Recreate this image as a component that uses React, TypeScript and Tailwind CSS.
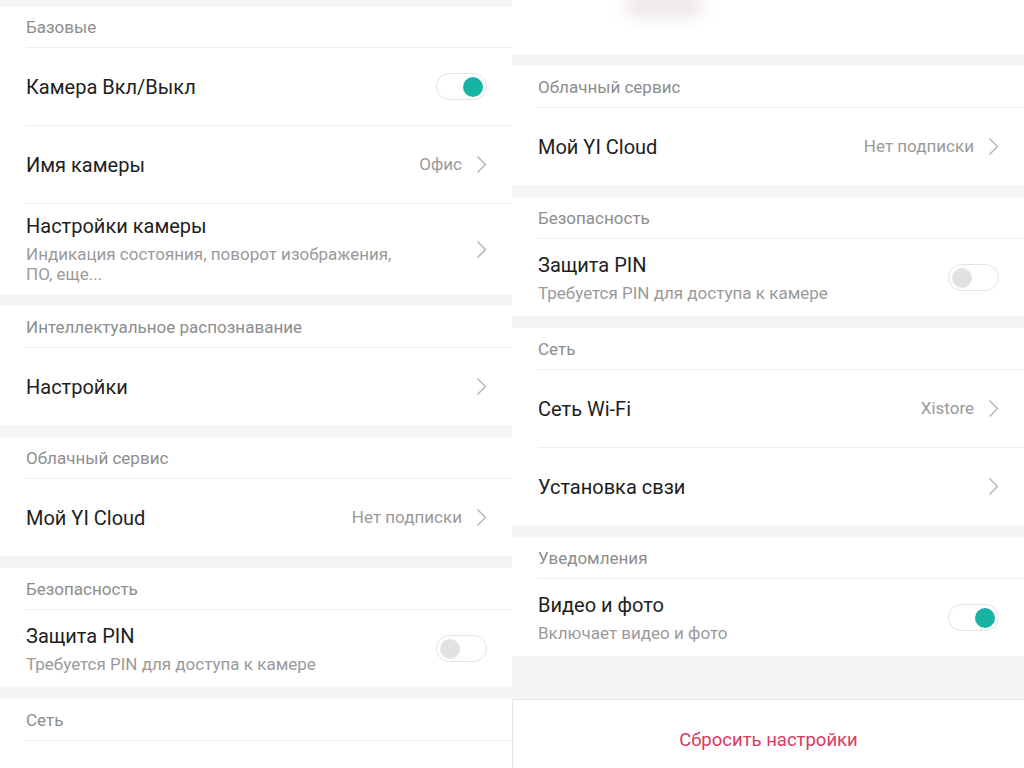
import React from "react";

type Item = {
  title: string;
  subtitle?: string;
  value?: string;
  toggle?: boolean;
  chevron?: boolean;
  tall?: boolean;
};

type Section = {
  header: string;
  items: Item[];
};

const leftSections: Section[] = [
  {
    header: "Базовые",
    items: [
      { title: "Камера Вкл/Выкл", toggle: true },
      { title: "Имя камеры", value: "Офис", chevron: true },
      {
        title: "Настройки камеры",
        subtitle: "Индикация состояния, поворот изображения, ПО, еще...",
        chevron: true,
        tall: true,
      },
    ],
  },
  {
    header: "Интеллектуальное распознавание",
    items: [{ title: "Настройки", chevron: true }],
  },
  {
    header: "Облачный сервис",
    items: [{ title: "Мой YI Cloud", value: "Нет подписки", chevron: true }],
  },
  {
    header: "Безопасность",
    items: [{ title: "Защита PIN", subtitle: "Требуется PIN для доступа к камере", toggle: false }],
  },
  // the next row is below the bottom edge of the screenshot
  { header: "Сеть", items: [] },
];

const rightSections: Section[] = [
  {
    header: "Облачный сервис",
    items: [{ title: "Мой YI Cloud", value: "Нет подписки", chevron: true }],
  },
  {
    header: "Безопасность",
    items: [{ title: "Защита PIN", subtitle: "Требуется PIN для доступа к камере", toggle: false }],
  },
  {
    header: "Сеть",
    items: [
      { title: "Сеть Wi-Fi", value: "Xistore", chevron: true },
      { title: "Установка свзи", chevron: true },
    ],
  },
  {
    header: "Уведомления",
    items: [{ title: "Видео и фото", subtitle: "Включает видео и фото", toggle: true }],
  },
];

function Chevron() {
  return (
    <svg width="11" height="19" viewBox="0 0 11 19" fill="none" className="shrink-0">
      <polyline points="1.5,1.5 9.5,9.5 1.5,17.5" stroke="#b8b8b8" strokeWidth="1.6" strokeLinejoin="round" />
    </svg>
  );
}

function Toggle({ on }: { on: boolean }) {
  return (
    <div
      className={
        "flex h-[27px] w-[51px] shrink-0 items-center rounded-full border border-[#e3e3e3] bg-white px-[3px] " +
        (on ? "justify-end" : "justify-start")
      }
    >
      <div className={on ? "h-[20px] w-[20px] rounded-full bg-[#17b4a4]" : "h-[20px] w-[20px] rounded-full bg-[#e2e2e2]"} />
    </div>
  );
}

function Row({ item }: { item: Item }) {
  return (
    <div
      className={
        "ml-[26px] flex shrink-0 items-center border-t border-[#eeeeee] pr-[25px] " +
        (item.tall ? "h-[91px]" : "h-[78px]")
      }
    >
      <div className="flex min-w-0 flex-1 flex-col justify-center">
        <div className="text-[20px] leading-[24px] text-[#1e1e1e]">{item.title}</div>
        {item.subtitle && (
          <div className={"mt-[6px] text-[17px] leading-[20px] text-[#9a9a9a] " + (item.tall ? "w-[385px]" : "")}>
            {item.subtitle}
          </div>
        )}
      </div>
      {item.value && <div className="mr-[14px] text-[17px] text-[#9a9a9a]">{item.value}</div>}
      {item.chevron && <Chevron />}
      {item.toggle !== undefined && <Toggle on={item.toggle} />}
    </div>
  );
}

function SectionBlock({ section, first }: { section: Section; first?: boolean }) {
  return (
    <div className={"shrink-0 bg-white " + (first ? "" : "mt-[12px]")}>
      <div
        className={
          "flex items-center px-[26px] text-[17px] text-[#8d8d8d] " + (first ? "h-[40px] pt-[1px]" : "h-[41px] pt-[2px]")
        }
      >
        {section.header}
      </div>
      {section.items.map((item) => (
        <Row key={item.title} item={item} />
      ))}
      {section.items.length === 0 && <div className="ml-[26px] h-[78px] border-t border-[#eeeeee]" />}
    </div>
  );
}

export default function App() {
  return (
    <div
      className="flex h-[768px] w-[1024px] overflow-hidden bg-[#f5f5f5]"
      style={{ fontFamily: "Roboto, 'Noto Sans', sans-serif" }}
    >
      {/* left screen */}
      <div className="flex w-[512px] shrink-0 flex-col pt-[7px]">
        {leftSections.map((s, i) => (
          <SectionBlock key={s.header + i} section={s} first={i === 0} />
        ))}
      </div>

      {/* right screen */}
      <div className="flex w-[512px] shrink-0 flex-col">
        <div className="flex h-[54px] shrink-0 bg-white">
          <div className="-mt-[6px] ml-[112px] h-[24px] w-[80px] rounded-full bg-[#efe9ea] blur-[7px]" />
        </div>
        {rightSections.map((s, i) => (
          <SectionBlock key={s.header + i} section={s} />
        ))}
        <div className="mt-[43px] flex h-[82px] shrink-0 items-center justify-center border-t border-l border-[#e6e6e6] bg-white text-[18.5px] text-[#d93a60]">
          Сбросить настройки
        </div>
      </div>
    </div>
  );
}
